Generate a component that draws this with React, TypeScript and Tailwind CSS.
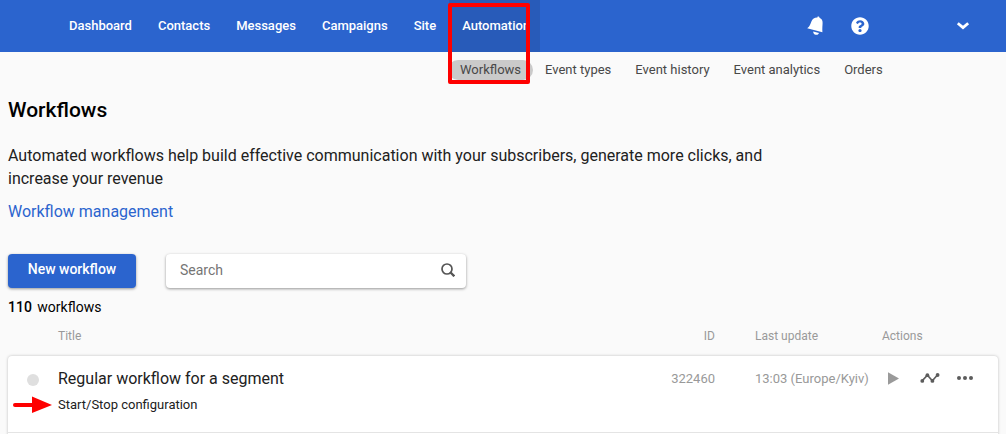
import { FaQuestionCircle } from "react-icons/fa";

const navItems = ["Dashboard", "Contacts", "Messages", "Campaigns", "Site", "Automation"];
const subItems = ["Workflows", "Event types", "Event history", "Event analytics", "Orders"];

const workflows = [
  {
    id: 322460,
    title: "Regular workflow for a segment",
    description: "Start/Stop configuration",
    updated: "13:03 (Europe/Kyiv)",
  },
];

const rowGrid = "grid grid-cols-[50px_1fr_120px_127px_116px]";

function Header() {
  return (
    <header className="flex h-13 items-stretch bg-[#2b64ce] pr-9 pl-14 text-white">
      <nav className="flex">
        {navItems.map((item) => (
          <a
            key={item}
            href="#"
            className={`flex items-center pl-[13px] text-[13px] font-medium ${
              item === "Automation" ? "bg-[#285bb9] pr-[10px]" : "pr-[13px]"
            }`}
          >
            {item}
          </a>
        ))}
      </nav>
      <div className="ml-auto flex items-center">
        <button type="button" aria-label="Notifications" className="mr-7">
          <svg viewBox="0 0 16 20" className="h-5 w-4" fill="currentColor">
            <path d="M10.6 0.6c.9-.4 1.9.2 1.9 1.2 2.3 1 3.2 2.8 3.1 5.2-.1 2.700-.4 5.200-.2 9.300L0.200 12.200c2.800-2.200 3.200-4.400 4.200-6.800C5.400 3 7.600 1.500 10.400 1.600Z" />
            <path d="M6.200 15.400l5.800 1.500c-.6 1.500-1.800 2.200-3.300 1.900-1.500-.4-2.500-1.700-2.500-3.400Z" />
          </svg>
        </button>
        <button type="button" aria-label="Help" className="mr-[87px]">
          <FaQuestionCircle className="size-[18px]" />
        </button>
        <button type="button" aria-label="Account menu">
          <svg viewBox="0 0 14 10" className="h-[10px] w-[14px]" fill="none" stroke="currentColor" strokeWidth="2.8">
            <path d="M1.800 2.200 7 6.600l5.200-4.400" />
          </svg>
        </button>
      </div>
    </header>
  );
}

function SubNav() {
  return (
    <nav className="mt-2 flex pl-112">
      {subItems.map((item) => (
        <a
          key={item}
          href="#"
          className={`rounded-full px-3 text-[13px] leading-5 whitespace-nowrap text-[#484848] ${
            item === "Workflows" ? "bg-[#cacaca]" : ""
          }`}
        >
          {item}
        </a>
      ))}
    </nav>
  );
}

function WorkflowTable() {
  return (
    <table className="mt-[11px] block text-left">
      <thead className="block">
        <tr className={`${rowGrid} pb-3 text-xs leading-4 text-[#999]`}>
          <td />
          <th className="font-normal">Title</th>
          <th className="pr-10 text-right font-normal">ID</th>
          <th className="font-normal">Last update</th>
          <th className="font-normal">Actions</th>
        </tr>
      </thead>
      <tbody className="block rounded-t bg-white pb-1 shadow-[0_0_3px_rgba(0,0,0,0.25)]">
        {workflows.map((w) => (
          <tr key={w.id} className={`${rowGrid} border-b border-[#e4e4e4] pt-[11px] pb-[17px]`}>
            <td className="pt-[7px] pl-[19px]">
              <span className="block size-3 rounded-full bg-[#dfdfdf]" />
            </td>
            <td className="relative">
              <a href="#" className="block text-base leading-6 text-[#212121]">
                {w.title}
              </a>
              <p className="mt-1 text-[13px] leading-5 text-[#212121]">{w.description}</p>
              <Arrow />
            </td>
            <td className="pr-10 text-right text-[13px] leading-6 text-[#999]">{w.id}</td>
            <td className="text-[13px] leading-6 whitespace-nowrap text-[#999]">{w.updated}</td>
            <td className="flex h-[22px] items-center pl-[6px] text-[#5c5c5c]">
              <button type="button" aria-label="Start" className="mr-[21px] text-[#9a9a9a]">
                <svg viewBox="0 0 11 13" className="h-[13px] w-[11px]" fill="currentColor">
                  <path d="M0 0.300 11 6.500 0 12.700Z" />
                </svg>
              </button>
              <button type="button" aria-label="Statistics" className="mr-[17px]">
                <svg viewBox="0 0 20 12" className="h-3 w-5" fill="currentColor">
                  <path d="M2.300 8.600 7.400 3.200l5 5.600 5.200-6" fill="none" stroke="currentColor" strokeWidth="1.600" />
                  <circle cx="2.300" cy="8.900" r="1.900" />
                  <circle cx="7.400" cy="3.200" r="1.900" />
                  <circle cx="12.400" cy="8.900" r="1.900" />
                  <circle cx="17.600" cy="3" r="1.900" />
                </svg>
              </button>
              <button type="button" aria-label="More">
                <svg viewBox="0 0 16 4" className="h-1 w-4" fill="currentColor">
                  <circle cx="2" cy="2" r="2" />
                  <circle cx="8" cy="2" r="2" />
                  <circle cx="14" cy="2" r="2" />
                </svg>
              </button>
            </td>
          </tr>
        ))}
      </tbody>
    </table>
  );
}

function Arrow() {
  return (
    <svg viewBox="0 0 40 18" className="absolute top-7 -left-[46px] h-[18px] w-10">
      <path d="M3 10h20" stroke="#fe0000" strokeWidth="4" strokeLinecap="round" />
      <path d="M20 1.500 40 10 20 18Z" fill="#fe0000" />
    </svg>
  );
}

export default function App() {
  return (
    <div className="relative min-h-screen bg-[#fafafa] font-[Roboto,sans-serif]">
      <Header />
      <SubNav />
      {/* highlight around the active menu item */}
      <div className="pointer-events-none absolute top-[3px] left-112 h-[81px] w-[82px] rounded-[2px] border-4 border-[#fe0000]" />
      <main className="px-2 pt-4">
        <h1 className="text-[21px] leading-7 font-medium text-black">Workflows</h1>
        <p className="mt-5 max-w-[780px] text-base leading-[23px] text-[#212121]">
          Automated workflows help build effective communication with your subscribers, generate more clicks, and
          increase your revenue
        </p>
        <a href="#" className="mt-[10px] block w-fit text-base leading-6 text-[#2b64ce]">
          Workflow management
        </a>
        <div className="mt-[30px] flex items-start gap-[30px]">
          <button
            type="button"
            className="h-[34px] w-32 rounded bg-[#2b64ce] pb-1 text-sm font-medium text-white shadow-[0_1px_3px_rgba(0,0,0,0.4)]"
          >
            New workflow
          </button>
          <label className="flex h-[34px] w-[300px] items-center rounded bg-white pr-[11px] pb-[2px] pl-[14px] shadow-[0_1px_3px_rgba(0,0,0,0.4)]">
            <input
              type="text"
              aria-label="Search"
              placeholder="Search"
              className="min-w-0 flex-1 text-sm outline-none placeholder:text-[#757575]"
            />
            <svg viewBox="0 0 14 14" className="size-[14px]" fill="none" stroke="#555">
              <circle cx="6" cy="6" r="5" strokeWidth="1.700" />
              <path d="m9.300 9.300 4 4" strokeWidth="2.300" />
            </svg>
          </label>
        </div>
        <p className="mt-[9px] text-sm leading-5 text-black">
          <b className="mr-[2px] font-medium">110</b> workflows
        </p>
        <WorkflowTable />
      </main>
    </div>
  );
}
